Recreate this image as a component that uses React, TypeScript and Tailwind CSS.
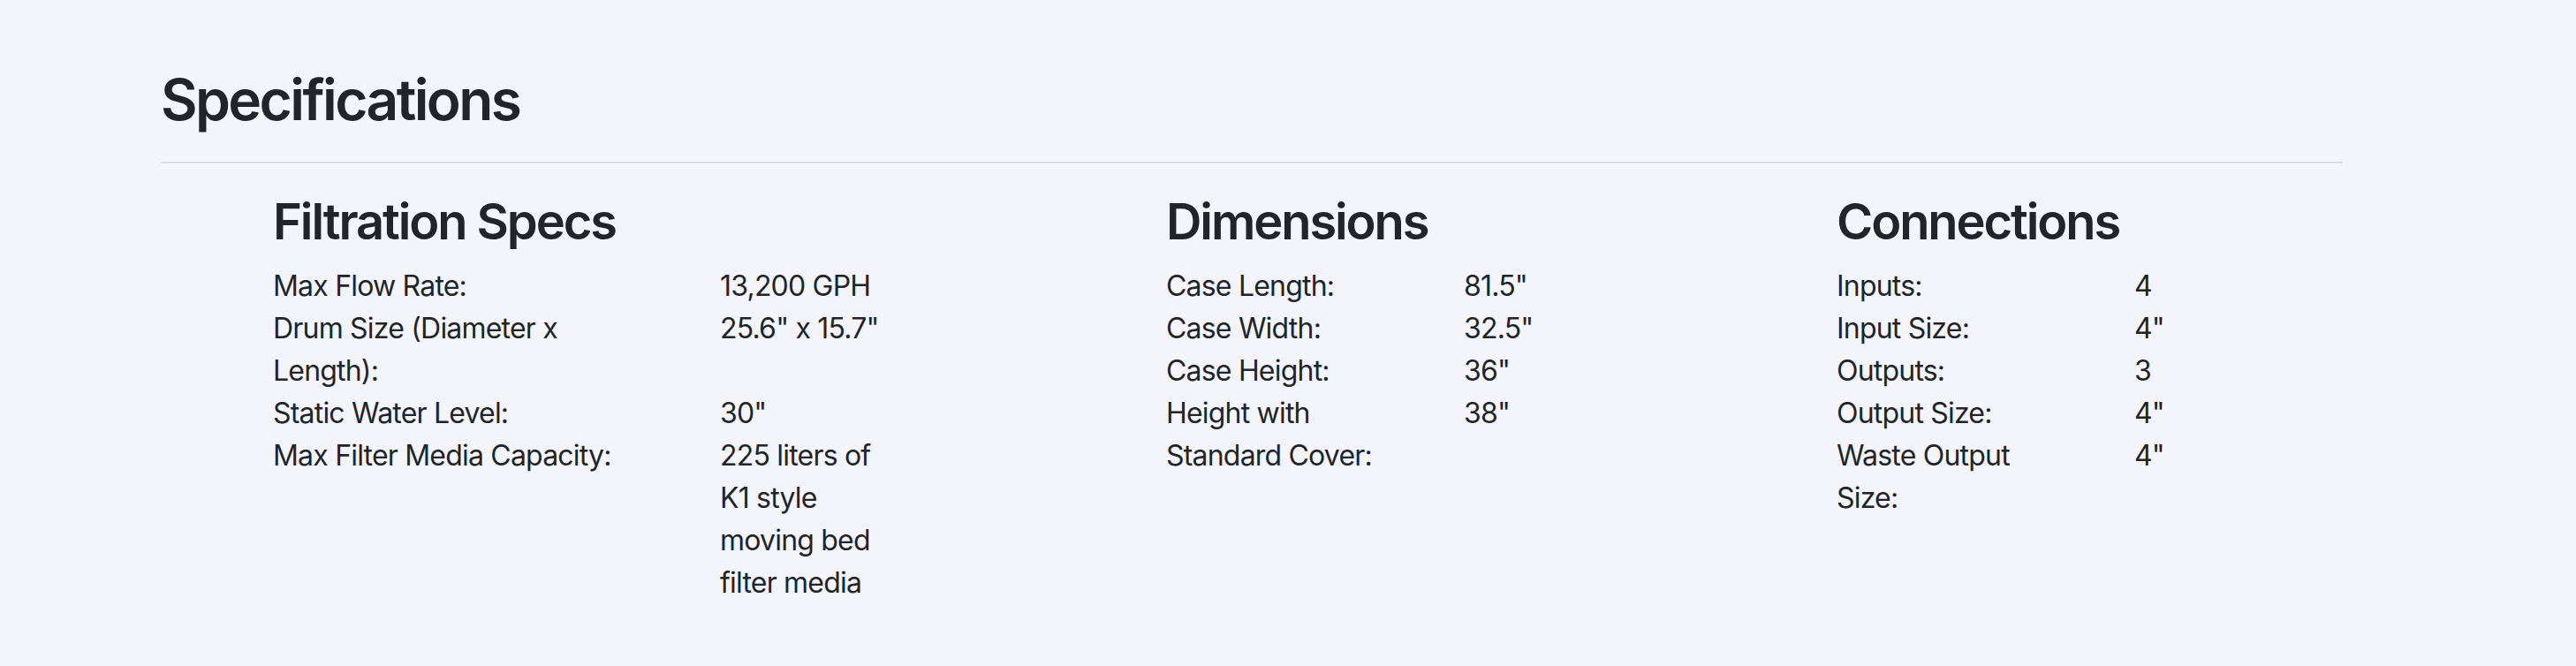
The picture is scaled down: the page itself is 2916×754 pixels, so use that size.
const filtration = [
  ["Max Flow Rate:", "13,200 GPH"],
  ["Drum Size (Diameter x Length):", '25.6" x 15.7"'],
  ["Static Water Level:", '30"'],
  ["Max Filter Media Capacity:", "225 liters of K1 style moving bed filter media"],
];

const dimensions = [
  ["Case Length:", '81.5"'],
  ["Case Width:", '32.5"'],
  ["Case Height:", '36"'],
  ["Height with Standard Cover:", '38"'],
];

const connections = [
  ["Inputs:", "4"],
  ["Input Size:", '4"'],
  ["Outputs:", "3"],
  ["Output Size:", '4"'],
  ["Waste Output Size:", '4"'],
];

function SpecList({ rows, cols }: { rows: string[][]; cols: string }) {
  return (
    <div className={`grid ${cols} text-[32px] leading-[48px] tracking-[-0.8px]`}>
      {rows.map(([label, value]) => (
        <div key={label} className="contents">
          <div>{label}</div>
          <div>{value}</div>
        </div>
      ))}
    </div>
  );
}

export default function App() {
  return (
    <main
      className="min-h-screen bg-[#f4f5fa] text-[#212529] pl-[182px] pt-[75px]"
      style={{ fontFamily: "Inter, 'Noto Sans', sans-serif" }}
    >
      <div className="w-[2470px]">
        <h2 className="text-[64px] leading-[1.2] font-semibold tracking-[-2.6px]">Specifications</h2>
        <hr className="mt-[31px] border-0 h-[2px] bg-[#dedfe4]" />

        <div className="flex pl-[127px] pt-[33px]">
          <section className="w-[1011px]">
            <h3 className="text-[56px] leading-[1.2] font-semibold tracking-[-2.1px] mb-[15px]">Filtration Specs</h3>
            <SpecList rows={filtration} cols="grid-cols-[440px_190px] gap-x-[66px]" />
          </section>

          <section className="w-[759px]">
            <h3 className="text-[56px] leading-[1.2] font-semibold tracking-[-2.1px] mb-[15px]">Dimensions</h3>
            <SpecList rows={dimensions} cols="grid-cols-[260px_auto] gap-x-[77px]" />
          </section>

          <section>
            <h3 className="text-[56px] leading-[1.2] font-semibold tracking-[-2.1px] mb-[15px]">Connections</h3>
            <SpecList rows={connections} cols="grid-cols-[215px_auto] gap-x-[122px]" />
          </section>
        </div>
      </div>
    </main>
  );
}
